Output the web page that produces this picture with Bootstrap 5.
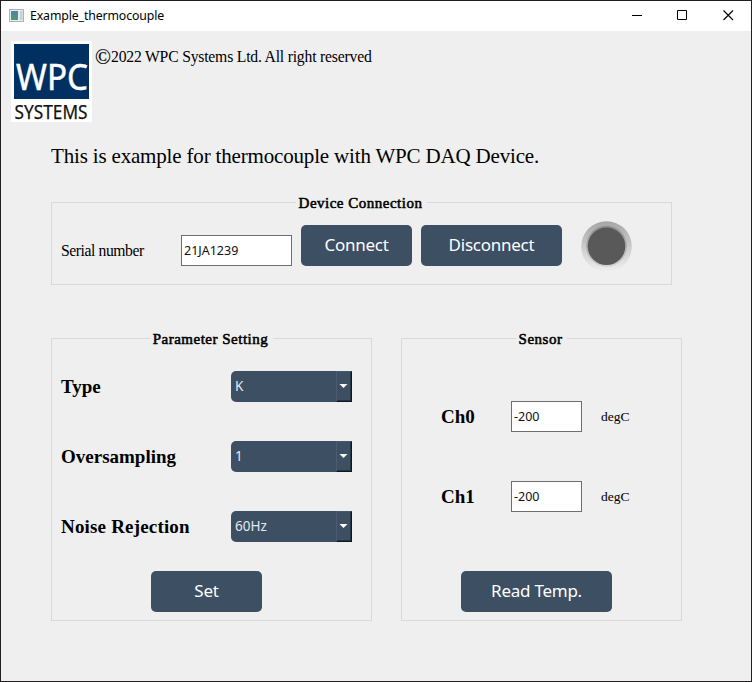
<!DOCTYPE html>
<html lang="en">
<head>
<meta charset="utf-8">
<meta name="viewport" content="width=device-width, initial-scale=1">
<title>Example_thermocouple</title>
<link href="https://cdn.jsdelivr.net/npm/bootstrap@5.3.0/dist/css/bootstrap.min.css" rel="stylesheet">
<style>
  :root { --panel: #efefef; --slate: #3d4f63; --line: #d9d9d9; }
  body { background: var(--panel); color: #000; font: 13px/20px "Noto Sans", "Open Sans", sans-serif; }
  .window { width: 752px; height: 682px; border: 1px solid #231f20; background: var(--panel); }
  .titlebar { height: 30px; font-family: "Noto Sans", sans-serif; font-size: 12.3px; letter-spacing: -.12px; }
  .app-name { margin-left: 5px; }
  .caption-btn { width: 46px; height: 30px; }
  .serif { font-family: "Liberation Serif", "Times New Roman", serif; white-space: nowrap; }
  .brand-row { padding: 10px 10px 0; height: 92px; gap: 3px; }
  .copyright { font-size: 15.7px; letter-spacing: -.2px; padding-top: 6px; line-height: 20px; }
  .copyright-mark { font-size: 21px; line-height: 18px; display: inline-block; width: 16px; -webkit-text-stroke: .15px #000; vertical-align: -2px; }
  .intro { font-size: 21px; line-height: 24px; letter-spacing: -.17px; margin: 21px 0 0 50px; height: 58px; }
  .group { border: 1px solid var(--line); }
  .group-title { margin: -11px auto 0; padding: 0 5px 0 3px; height: 20px; background: var(--panel);
    font-size: 15px; line-height: 22px; letter-spacing: .5px; -webkit-text-stroke: .55px #000; }
  .group-device { width: 621px; height: 83px; margin-left: 50px; }
  .device-row { height: 51px; padding-left: 9px; margin-top: 8px; }
  .device-label { width: 120px; font-size: 15.7px; letter-spacing: -.43px; padding-top: 10px; }
  .field { height: 31px; border: 1px solid #6e6e6e; border-radius: 0; background: #fff; color: #111;
    padding: 0 2px 1px; font-size: 12.5px; line-height: 28px; }
  .field:focus { box-shadow: none; border-color: #0078d7; }
  .field-serial { width: 111px; margin: 10px 9px 0 0; }
  .field-temp { width: 71px; }
  .btn-slate { --bs-btn-color: #fff; --bs-btn-bg: var(--slate); --bs-btn-hover-color: #fff; --bs-btn-hover-bg: #4a6078;
    --bs-btn-active-bg: #32414f; --bs-btn-active-color: #fff; --bs-btn-border-width: 0; --bs-btn-border-radius: 5px;
    height: 41px; padding: 0 0 2px; font: 17px/39px "Noto Sans", sans-serif; letter-spacing: -.25px; white-space: nowrap; }
  .w-111 { width: 111px; } .w-141 { width: 141px; } .w-151 { width: 151px; }
  .btn-disconnect { margin-left: 9px; }
  .led { width: 51px; height: 51px; margin-left: 19px; }
  .groups { gap: 29px; margin: 53px 0 0 50px; }
  .group-param { width: 321px; height: 283px; }
  .group-sensor { width: 281px; height: 283px; }
  .param-list { gap: 39px; padding: 23px 0 0 9px; }
  .param-row, .sensor-row { height: 31px; }
  .param-label { width: 170px; font-size: 19px; font-weight: 700; }
  .label-wide { letter-spacing: .18px; }
  .combo { width: 121px; height: 31px; background: var(--slate); border-radius: 5px 0 0 5px; color: #e3e9f1;
    font-size: 13.5px; padding: 0 0 0 4px; }
  .combo-value { margin-top: -1px; }
  .combo-arrow { width: 16px; height: 31px; border: 1px solid; border-color: #46586d #0f1822 #0f1822 #4b5c70;
    box-shadow: inset -1px -1px #263443; }
  .sensor-list { gap: 49px; padding: 53px 0 0 39px; }
  .ch-label { width: 70px; font-size: 19px; font-weight: 700; }
  .unit { font-size: 13.5px; margin-left: 19px; }
  .btn-set { margin: 29px 0 0 99px; }
  .btn-read { margin: 59px 0 0 59px; }
</style>
</head>
<body>
<div class="window d-flex flex-column overflow-hidden">
  <header class="titlebar d-flex align-items-center bg-white">
    <svg class="ms-2" width="16" height="14" viewBox="0 0 16 14" aria-hidden="true">
      <defs><linearGradient id="app" x2="0" y2="1"><stop stop-color="#4b86a5"/><stop offset="1" stop-color="#4f9a72"/></linearGradient></defs>
      <rect x=".5" y=".5" width="14" height="12" fill="#e9edef" stroke="#aab2b8"/>
      <rect x="2" y="2" width="7" height="9" fill="url(#app)"/><rect x="11" y="2" width="2.5" height="9" fill="#c9ced2"/>
    </svg>
    <span class="flex-grow-1 app-name">Example_thermocouple</span>
    <svg class="caption-btn" viewBox="0 0 46 30"><path d="M19 14.500h10" stroke="#000"/></svg>
    <svg class="caption-btn" viewBox="0 0 46 30"><path d="M18.500 9.500h9v9h-9z" fill="none" stroke="#000"/></svg>
    <svg class="caption-btn" viewBox="0 0 46 30"><path d="M18.500 9.500l9.500 9.500m0-9.500l-9.500 9.500" stroke="#000" stroke-width="1.1"/></svg>
  </header>

  <div class="brand-row d-flex">
    <svg class="overflow-visible" width="81" height="81" viewBox="0 0 81 81" role="img" aria-label="WPC Systems">
      <rect width="81" height="81" fill="#fff"/><rect x="3" y="3" width="75" height="55" fill="#003061"/>
      <g font-family="Noto Sans, sans-serif">
        <text x="5" y="49" font-size="37" fill="#fff" stroke="#fff" stroke-width=".5" textLength="72" lengthAdjust="spacingAndGlyphs">WPC</text>
        <text x="3.500" y="78" font-size="19" fill="#111" stroke="#111" stroke-width=".25" textLength="73" lengthAdjust="spacingAndGlyphs">SYSTEMS</text>
      </g>
    </svg>
    <div class="serif copyright"><span class="copyright-mark">©</span>2022 WPC Systems Ltd. All right reserved</div>
  </div>

  <p class="serif intro">This is example for thermocouple with WPC DAQ Device.</p>

  <section class="group group-device d-flex flex-column">
    <h2 class="serif group-title">Device Connection</h2>
    <div class="device-row d-flex align-items-center">
      <label class="serif device-label" for="serial">Serial number</label>
      <input id="serial" class="form-control field field-serial" value="21JA1239">
      <button class="btn btn-slate w-111">Connect</button>
      <button class="btn btn-slate w-141 btn-disconnect">Disconnect</button>
      <svg class="led overflow-visible" viewBox="0 0 51 51" role="img" aria-label="Disconnected">
        <defs>
          <linearGradient id="ring" x2="0" y2="1"><stop stop-color="#a6a6a6"/><stop offset="1" stop-color="#efefef"/></linearGradient>
          <linearGradient id="rim" x2="0" y2="1"><stop stop-color="#8c8c8c"/><stop offset="1" stop-color="#d2d2d2"/></linearGradient>
        </defs>
        <circle cx="25.500" cy="26.500" r="25.300" fill="url(#ring)"/>
        <circle cx="25.500" cy="26.300" r="20.500" fill="url(#rim)"/>
        <circle cx="25.500" cy="26.300" r="18.800" fill="#595959"/>
      </svg>
    </div>
  </section>

  <div class="groups d-flex">
    <section class="group group-param d-flex flex-column">
      <h2 class="serif group-title">Parameter Setting</h2>
      <div class="param-list d-flex flex-column">
        <div class="param-row d-flex align-items-center">
          <span class="serif param-label">Type</span>
          <div class="combo d-flex align-items-center" role="combobox"><span class="combo-value flex-grow-1">K</span>
            <svg class="combo-arrow" viewBox="0 0 14 29"><path d="M2.500 12h8l-4 4z" fill="#fff"/></svg></div>
        </div>
        <div class="param-row d-flex align-items-center">
          <span class="serif param-label">Oversampling</span>
          <div class="combo d-flex align-items-center" role="combobox"><span class="combo-value flex-grow-1">1</span>
            <svg class="combo-arrow" viewBox="0 0 14 29"><path d="M2.500 12h8l-4 4z" fill="#fff"/></svg></div>
        </div>
        <div class="param-row d-flex align-items-center">
          <span class="serif param-label label-wide">Noise Rejection</span>
          <div class="combo d-flex align-items-center" role="combobox"><span class="combo-value flex-grow-1">60Hz</span>
            <svg class="combo-arrow" viewBox="0 0 14 29"><path d="M2.500 12h8l-4 4z" fill="#fff"/></svg></div>
        </div>
      </div>
      <button class="btn btn-slate btn-set w-111">Set</button>
    </section>

    <section class="group group-sensor d-flex flex-column">
      <h2 class="serif group-title">Sensor</h2>
      <div class="sensor-list d-flex flex-column">
        <div class="sensor-row d-flex align-items-center">
          <label class="serif ch-label" for="ch0">Ch0</label>
          <input id="ch0" class="form-control field field-temp" value="-200">
          <span class="serif unit">degC</span>
        </div>
        <div class="sensor-row d-flex align-items-center">
          <label class="serif ch-label" for="ch1">Ch1</label>
          <input id="ch1" class="form-control field field-temp" value="-200">
          <span class="serif unit">degC</span>
        </div>
      </div>
      <button class="btn btn-slate btn-read w-151">Read Temp.</button>
    </section>
  </div>
</div>
<script src="https://cdn.jsdelivr.net/npm/bootstrap@5.3.0/dist/js/bootstrap.bundle.min.js"></script>
</body>
</html>
